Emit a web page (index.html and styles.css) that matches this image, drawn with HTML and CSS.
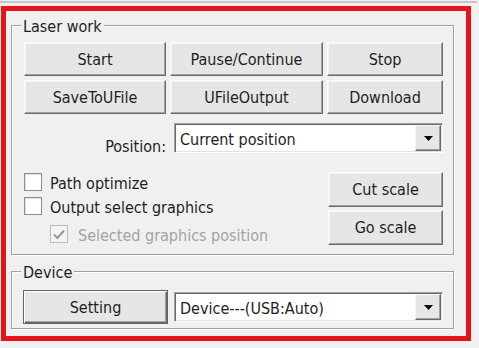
FILE: index.html
```html
<!DOCTYPE html>
<html lang="en">
<head>
    <meta charset="UTF-8">
    <meta name="viewport" content="width=device-width, initial-scale=1.0">
    <title>Laser work</title>
    <link rel="stylesheet" href="styles.css">
</head>
<body>
    <div class="topline"></div>
    <div class="frame">
        <!-- 雕刻工作 -->
        <div class="group group_laser">
            <div class="group_title">Laser work</div>
            <div class="btn_grid">
                <button class="btn">Start</button>
                <button class="btn">Pause/Continue</button>
                <button class="btn">Stop</button>
                <button class="btn">SaveToUFile</button>
                <button class="btn">UFileOutput</button>
                <button class="btn">Download</button>
            </div>
            <div class="pos_row">
                <span class="pos_label">Position:</span>
                <div class="combo">
                    <span class="combo_text">Current position</span>
                    <span class="combo_arrow">
                        <svg width="9" height="5" viewBox="0 0 9 5"><path d="M0 0h9L4.5 5z" fill="#000"/></svg>
                    </span>
                </div>
            </div>
            <div class="options">
                <div class="checks">
                    <label class="check"><span class="box"></span><span class="check_text">Path optimize</span></label>
                    <label class="check"><span class="box"></span><span class="check_text">Output select graphics</span></label>
                    <label class="check check_sub disabled">
                        <span class="box">
                            <svg width="12" height="11" viewBox="0 0 12 11"><path d="M1 5.5l3.5 3.5L11 1.5" fill="none" stroke="#9a9a9a" stroke-width="2"/></svg>
                        </span>
                        <span class="check_text">Selected graphics position</span>
                    </label>
                </div>
                <div class="scale_btns">
                    <button class="btn">Cut scale</button>
                    <button class="btn">Go scale</button>
                </div>
            </div>
        </div>

        <!-- 設備 -->
        <div class="group group_device">
            <div class="group_title">Device</div>
            <div class="device_row">
                <button class="btn btn_default">Setting</button>
                <div class="combo">
                    <span class="combo_text">Device---(USB:Auto)</span>
                    <span class="combo_arrow">
                        <svg width="9" height="5" viewBox="0 0 9 5"><path d="M0 0h9L4.5 5z" fill="#000"/></svg>
                    </span>
                </div>
            </div>
        </div>
    </div>
</body>
</html>
```

FILE: styles.css
```css
*{
    box-sizing: border-box;
}
body{
    margin: 0;
    padding: 0;
    background-color: #f0f0f0;
    font-family: "DejaVu Sans Condensed", "DejaVu Sans", sans-serif;
    font-stretch: condensed;
    font-size: 16px;
    color: #1e1e1e;
}
.topline{
    height: 2px;
    margin: 1px 2px 0 0;
    background-color: #c6c6c6;
}
.frame{
    width: 470px;
    height: 335px;
    margin: 3px 0 0 1px;
    border: 5px solid #e5141c;
}
    .group{
        width: 443px;
        margin-left: 5px;
        border: 1px solid #a0a0a0;
        box-shadow: inset 1px 1px 0 #fff, 1px 1px 0 #fff;
        padding: 0 10px 8px 12px;
    }
    .group_laser{
        margin-top: 14px;
    }
    .group_device{
        margin-top: 16px;
        padding-bottom: 4px;
    }
        .group_title{
            display: table;
            margin: -8px 0 0 -3px;
            padding: 0 2px;
            line-height: 18px;
            background-color: #f0f0f0;
        }

/* 按鈕 */
.btn{
    font: inherit;
    color: inherit;
    height: 34px;
    padding: 0;
    background-color: #e6e6e6;
    border: 1px solid;
    border-color: #fcfcfc #6b6b6b #6b6b6b #fcfcfc;
    box-shadow: inset -1px -1px 0 #a0a0a0, inset 1px 1px 0 #f4f4f4;
}
.btn_default{
    border-color: #646464;
    box-shadow: inset 1px 1px 0 #fff, inset -1px -1px 0 #6b6b6b, inset -2px -2px 0 #a0a0a0;
}
.btn_grid{
    display: grid;
    grid-template-columns: 142px 153px 116px;
    grid-auto-rows: 34px;
    gap: 4px;
    margin-top: 6px;
}

/* 下拉選單 */
.combo{
    width: 269px;
    height: 30px;
    display: flex;
    background-color: #fff;
    border: 1px solid;
    border-color: #a0a0a0 #fff #fff #a0a0a0;
    box-shadow: inset 1px 1px 0 #696969, inset -1px -1px 0 #e3e3e3;
    padding: 1px;
}
    .combo_text{
        flex: 1;
        padding: 6px 0 0 4px;
        line-height: 18px;
        white-space: nowrap;
    }
    .combo_arrow{
        width: 26px;
        display: flex;
        justify-content: center;
        align-items: center;
        background-color: #e6e6e6;
        border: 1px solid;
        border-color: #f4f4f4 #6b6b6b #6b6b6b #f4f4f4;
        box-shadow: inset -1px -1px 0 #a0a0a0;
    }
.pos_row{
    height: 30px;
    display: flex;
    justify-content: flex-end;
    align-items: flex-start;
    margin-top: 9px;
}
    .pos_label{
        margin: 15px 8px 0 0;
        line-height: 18px;
    }

/* 勾選項目 */
.options{
    display: flex;
    justify-content: space-between;
    margin-top: 17px;
}
    .checks{
        display: flex;
        flex-direction: column;
    }
        .check{
            height: 24px;
            display: flex;
            align-items: center;
        }
        .check_sub{
            margin: 4px 0 0 26px;
        }
            .box{
                width: 18px;
                height: 18px;
                display: flex;
                justify-content: center;
                align-items: center;
                margin-right: 8px;
                background-color: #fff;
                border: 1px solid #8e8f8f;
                box-shadow: inset 1px 1px 0 #e2e2e2;
            }
            .check_text{
                line-height: 18px;
                margin-top: 3px;
                white-space: nowrap;
            }
        .disabled{
            color: #a3a3a3;
        }
            .disabled .box{
                background-color: #f4f4f4;
                border-color: #bcbcbc;
                box-shadow: none;
                margin-right: 10px;
            }
    .scale_btns{
        width: 115px;
        display: flex;
        flex-direction: column;
        gap: 3px;
        margin: 2px 0 0 0;
    }
        .scale_btns .btn{
            height: 35px;
        }

.device_row{
    display: flex;
    justify-content: space-between;
    align-items: center;
    margin: 8px 0 0 -1px;
}
    .device_row .btn{
        width: 145px;
    }
```
